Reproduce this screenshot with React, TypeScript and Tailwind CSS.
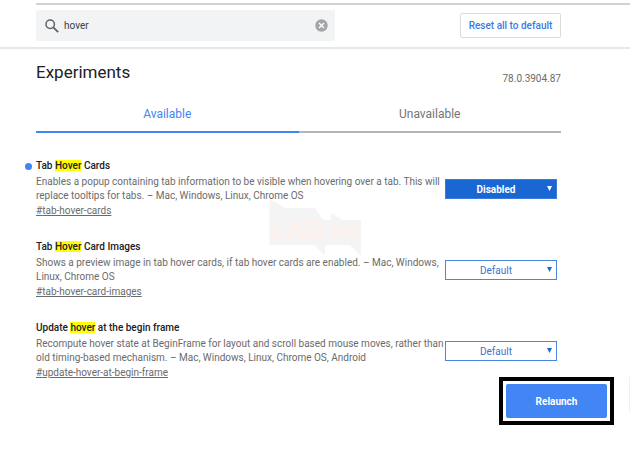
import { useState } from "react";

type Flag = {
    id: string;
    before: string;
    match: string;
    after: string;
    description: string;
    initial: string;
};

const flags: Flag[] = [
    {
        id: "tab-hover-cards",
        before: "Tab ",
        match: "Hover",
        after: " Cards",
        description:
            "Enables a popup containing tab information to be visible when hovering over a tab. This will replace tooltips for tabs. – Mac, Windows, Linux, Chrome OS",
        initial: "Disabled",
    },
    {
        id: "tab-hover-card-images",
        before: "Tab ",
        match: "Hover",
        after: " Card Images",
        description:
            "Shows a preview image in tab hover cards, if tab hover cards are enabled. – Mac, Windows, Linux, Chrome OS",
        initial: "Default",
    },
    {
        id: "update-hover-at-begin-frame",
        before: "Update ",
        match: "hover",
        after: " at the begin frame",
        description:
            "Recompute hover state at BeginFrame for layout and scroll based mouse moves, rather than old timing-based mechanism. – Mac, Windows, Linux, Chrome OS, Android",
        initial: "Default",
    },
];

function FlagRow({ flag }: { flag: Flag }) {
    const [value, setValue] = useState(flag.initial);
    const changed = value !== "Default";

    return (
        <li id={flag.id} className="relative flex items-start justify-between">
            {changed && (
                <span className="absolute -left-[11px] top-[3px] size-[7px] rounded-full bg-[#4285f4]" />
            )}
            <div className="min-w-0 flex-1">
                <h3
                    id={`${flag.id}-title`}
                    className="text-[10px] leading-3 font-medium text-[#202124]"
                >
                    {flag.before}
                    <mark className="bg-[#ffff00] text-[#202124]">{flag.match}</mark>
                    {flag.after}
                </h3>
                <p className="mt-[3px] text-[10px] leading-[14px] text-[#6b6b6b]">{flag.description}</p>
                <a
                    href={`#${flag.id}`}
                    className="mt-[2px] block w-fit text-[10px] leading-3 text-[#6b6b6b] underline"
                >
                    #{flag.id}
                </a>
            </div>
            <div className="relative mr-1 mt-[19px] w-[112px]">
                <select
                    aria-labelledby={`${flag.id}-title`}
                    value={value}
                    onChange={(e) => setValue(e.target.value)}
                    className={
                        changed
                            ? "block h-5 w-full appearance-none border border-[#3c7bdb] bg-[#1967d2] pr-[10px] text-center text-[10px] font-bold text-white [text-align-last:center]"
                            : "block h-5 w-full appearance-none border border-[#4a86e0] bg-white pr-[10px] text-center text-[10px] text-[#3f72d0] [text-align-last:center]"
                    }
                >
                    <option>Default</option>
                    <option>Enabled</option>
                    <option>Disabled</option>
                </select>
                <svg
                    viewBox="0 0 5 5"
                    className={
                        changed
                            ? "pointer-events-none absolute right-[5px] top-[7px] size-[5px] fill-white"
                            : "pointer-events-none absolute right-[5px] top-[7px] size-[5px] fill-[#1967d2]"
                    }
                >
                    <path d="M0 0h5L2.5 5z" />
                </svg>
            </div>
        </li>
    );
}

function Watermark() {
    return (
        <svg
            viewBox="0 0 94 58"
            aria-hidden="true"
            className="pointer-events-none absolute left-[268px] top-[199px] w-[94px]"
        >
            <path
                d="M1.5 0L17 9h30l8 12h8v-7l11 7h19v36L82 46H57v11L47 46H1.5z"
                fill="#f4f4f4"
            />
            <g
                fill="#fdf1ee"
                fontFamily="Roboto, 'Liberation Sans', sans-serif"
                fontWeight="900"
            >
                <text x="4" y="41" fontSize="27">
                    LAG
                </text>
                <text x="56" y="41" fontSize="20">
                    .VN
                </text>
            </g>
        </svg>
    );
}

export default function App() {
    const [query, setQuery] = useState("hover");
    const [tab, setTab] = useState("available");

    return (
        <div className="relative overflow-hidden bg-white font-['Roboto','Liberation_Sans',sans-serif]">
            <header className="border-b-2 border-[#e8e8e8] pt-[3px]">
                <div className="ml-9 border-t-2 border-[#d2d2d2]" />
                <div className="flex items-center justify-between pb-[6px] pl-9 pr-[69px] pt-[5px]">
                    <div className="flex h-[31px] w-[299px] items-center rounded-xs bg-[#f1f3f4] pl-[9px] pr-[7px]">
                        <svg viewBox="0 0 14 14" className="size-[14px] shrink-0" fill="none" stroke="#5f6368">
                            <circle cx="5.2" cy="5.2" r="4.2" strokeWidth="1.5" />
                            <path d="M8.3 8.3l4.9 4.9" strokeWidth="1.8" />
                        </svg>
                        <input
                            type="text"
                            aria-label="Search flags"
                            value={query}
                            onChange={(e) => setQuery(e.target.value)}
                            className="ml-[5px] min-w-0 flex-1 bg-transparent text-[10px] text-[#3c4043] outline-none"
                        />
                        <button type="button" aria-label="Clear search" onClick={() => setQuery("")}>
                            <svg viewBox="0 0 13 13" className="size-[13px]">
                                <circle cx="6.5" cy="6.5" r="6.2" fill="#a3a5a7" />
                                <path d="M4 4l5 5M9 4l-5 5" stroke="#fff" strokeWidth="1.4" />
                            </svg>
                        </button>
                    </div>
                    <button
                        type="button"
                        className="h-[25px] w-[101px] rounded-xs border border-[#dadce0] text-[10px] font-medium text-[#3b78e7]"
                    >
                        Reset all to default
                    </button>
                </div>
            </header>

            <main className="pl-9 pr-[69px]">
                <div className="flex items-end justify-between pt-[11px]">
                    <h1 className="pb-px text-[17px] leading-6 text-[#202124]">Experiments</h1>
                    <span className="text-[10px] leading-3 text-[#6b6b6b]">78.0.3904.87</span>
                </div>

                <div role="tablist" className="mt-3 grid grid-cols-2 text-xs">
                    <button
                        type="button"
                        role="tab"
                        aria-selected={tab === "available"}
                        onClick={() => setTab("available")}
                        className="h-9 border-b-2 border-[#4285f4] text-[#4285f4]"
                    >
                        Available
                    </button>
                    <button
                        type="button"
                        role="tab"
                        aria-selected={tab === "unavailable"}
                        onClick={() => setTab("unavailable")}
                        className="h-9 border-b-2 border-[#b5b5b5] text-[#757575]"
                    >
                        Unavailable
                    </button>
                </div>

                <ul className="mt-[27px] flex flex-col gap-6">
                    {flags.map((flag) => (
                        <FlagRow key={flag.id} flag={flag} />
                    ))}
                </ul>
            </main>

            <footer className="-mt-[2px] flex items-start justify-end">
                <div className="mr-[15px] border-4 border-black bg-white p-[3px]">
                    <button
                        type="button"
                        className="block h-[34px] w-[101px] rounded-xs bg-[#4285f4] text-[10px] font-bold text-white"
                    >
                        Relaunch
                    </button>
                </div>
                <div className="h-9 w-px bg-[#f0f0f0]" />
            </footer>

            <Watermark />
        </div>
    );
}
